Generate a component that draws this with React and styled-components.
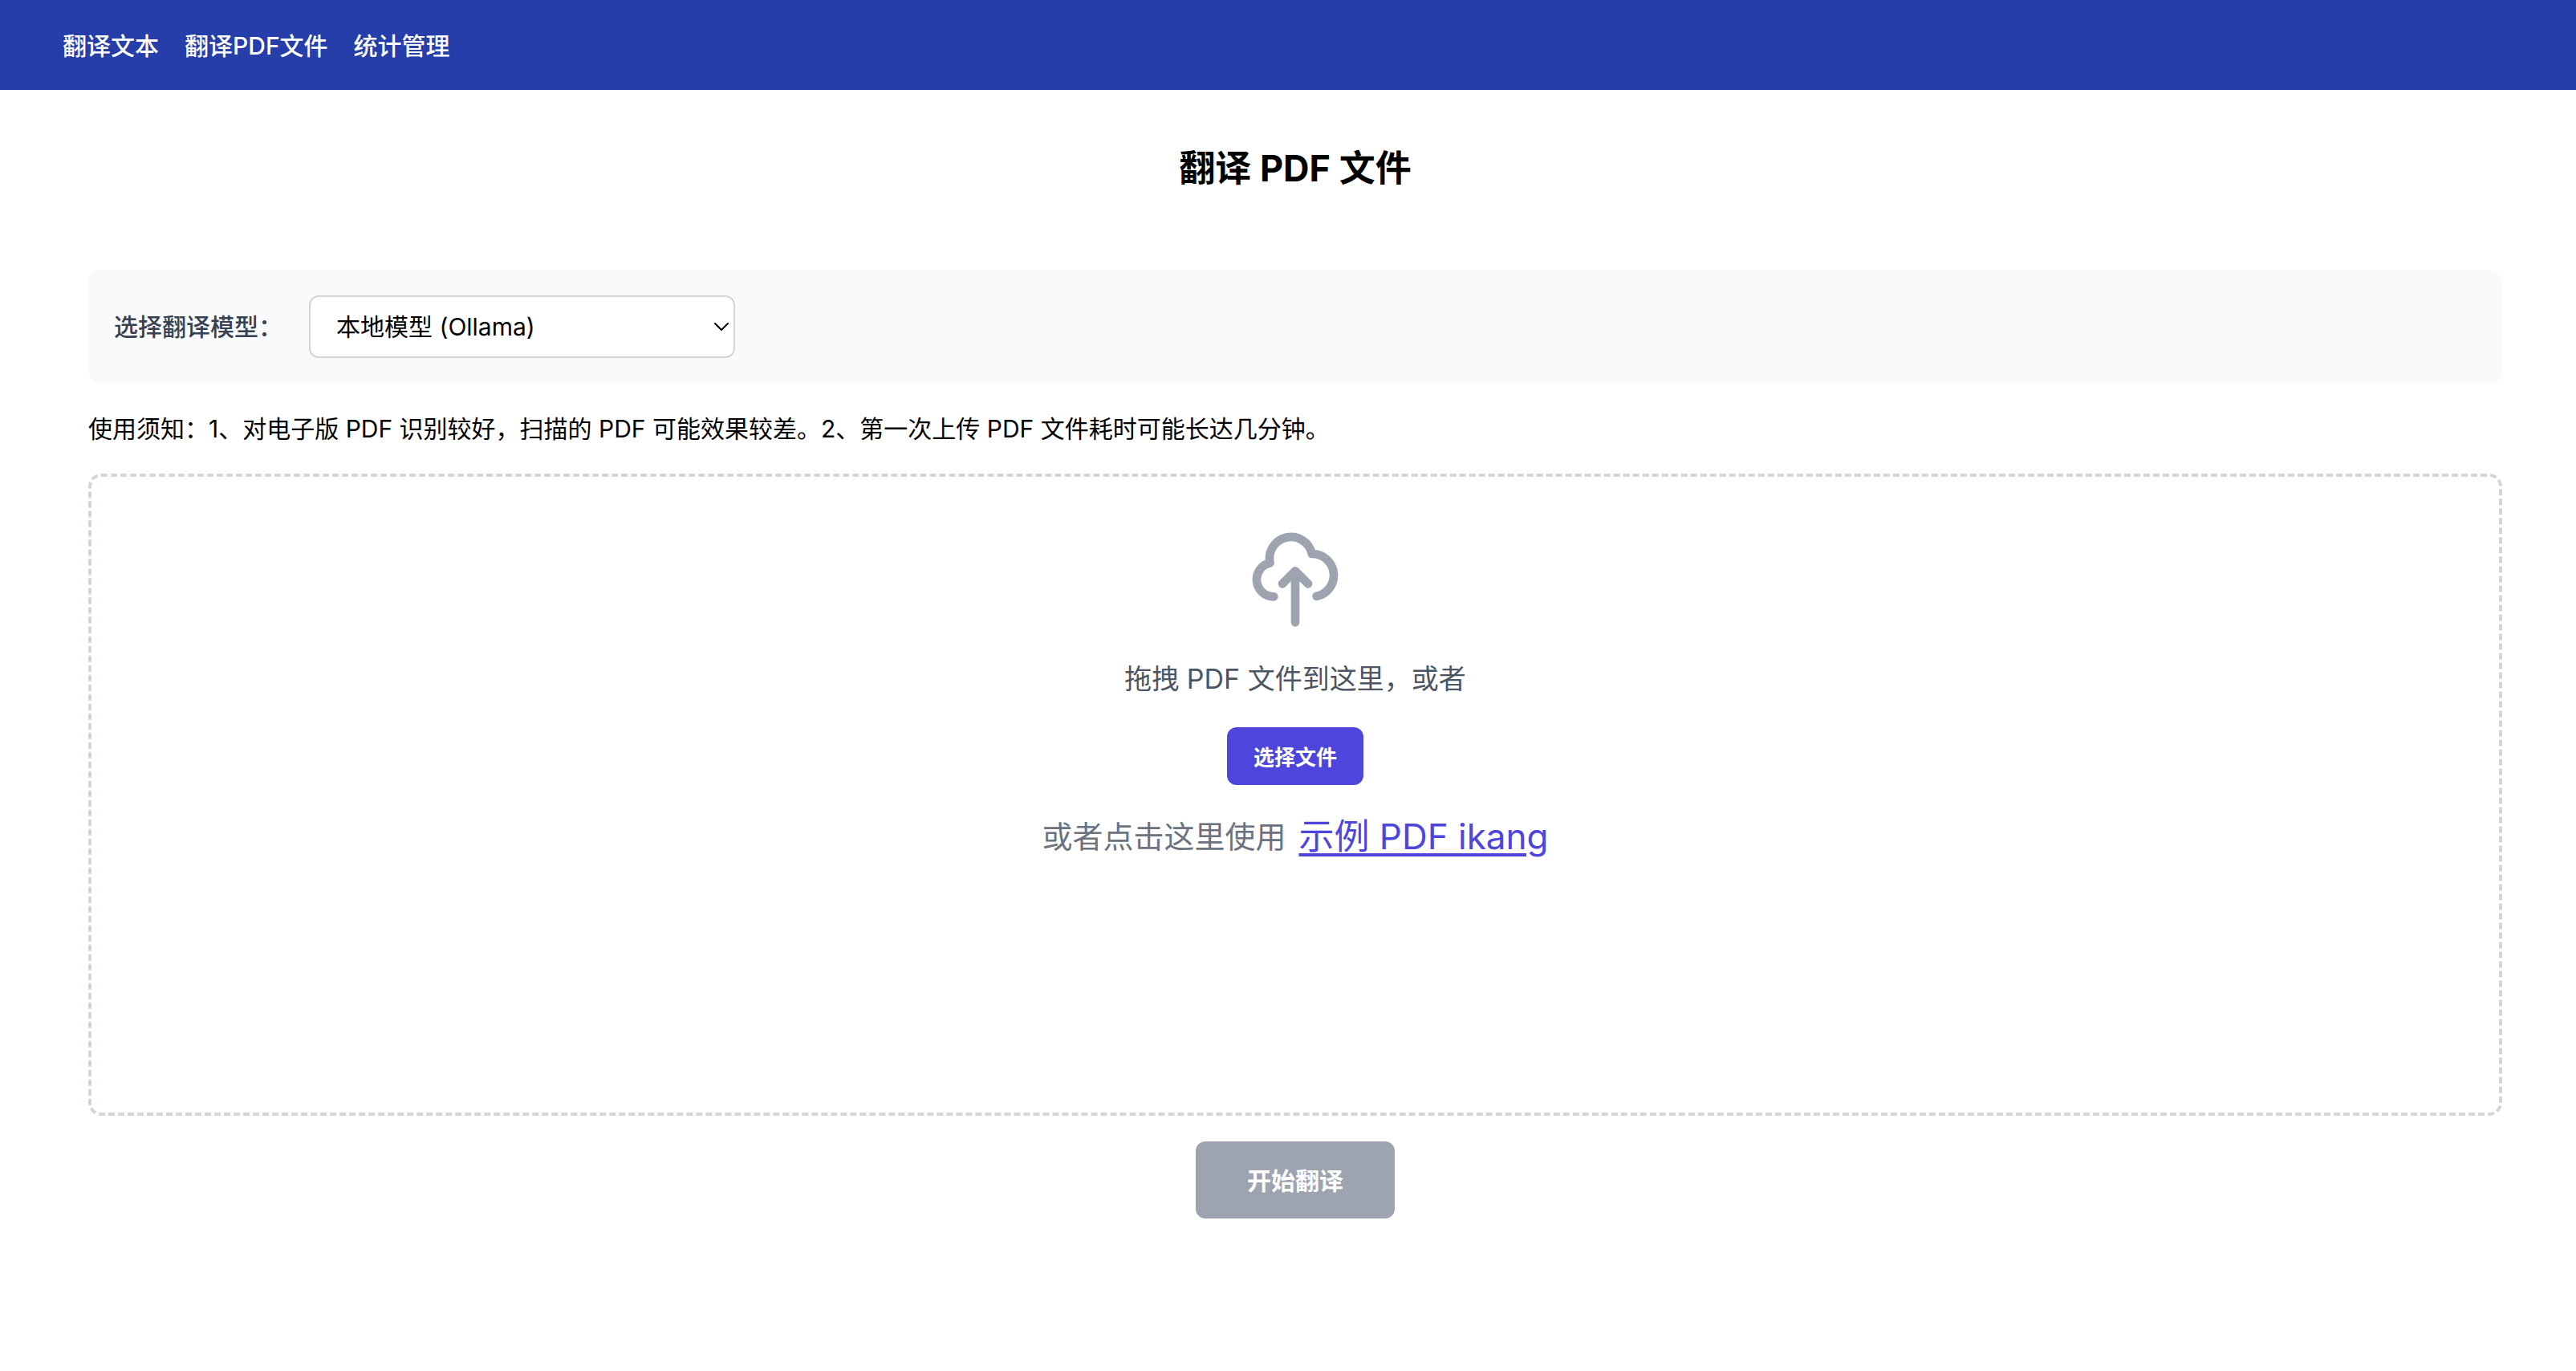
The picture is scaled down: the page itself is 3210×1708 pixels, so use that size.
import React, { useState } from "react";
import styled, { createGlobalStyle } from "styled-components";

const GlobalStyle = createGlobalStyle`
  *, *::before, *::after { box-sizing: border-box; }
  body {
    margin: 0;
    background: #fff;
    color: #000;
    font-family: Inter, "Noto Sans CJK SC", sans-serif;
    font-size: 30px;
    line-height: 48px;
  }
  button, select { font-family: inherit; }
`;

const Nav = styled.nav`
  display: flex;
  align-items: center;
  gap: 32px;
  height: 112px;
  padding: 2px 78px 0;
  background: #263ea9;
`;

const NavLink = styled.a`
  color: #fff;
  font-weight: 500;
  text-decoration: none;
`;

const Main = styled.main`
  display: flex;
  flex-direction: column;
  padding: 64px 92px 64px 110px;
`;

const Title = styled.h1`
  margin: 0 0 92px;
  font-size: 45px;
  font-weight: 700;
  line-height: 68px;
  text-align: center;
`;

const ModelPanel = styled.div`
  display: flex;
  align-items: center;
  gap: 33px;
  padding: 32px;
  border-radius: 16px;
  background: #f9fafc;
`;

const Label = styled.label`
  color: #374151;
  font-weight: 500;
`;

const SelectWrap = styled.div`
  position: relative;
  width: 531px;
`;

const Select = styled.select`
  display: block;
  width: 100%;
  height: 78px;
  padding: 0 32px;
  border: 2px solid #d2d5da;
  border-radius: 12px;
  background: #fff;
  color: #000;
  font-size: 30px;
  appearance: none;
`;

const Chevron = styled.svg`
  position: absolute;
  top: 30px;
  right: 8px;
  width: 18px;
  height: 18px;
  pointer-events: none;
`;

const Notice = styled.p`
  margin: 32px 0;
`;

const DropZone = styled.section`
  display: flex;
  flex-direction: column;
  align-items: center;
  gap: 32px;
  min-height: 800px;
  padding: 64px;
  border: 4px dashed #d2d5da;
  border-radius: 16px;
`;

const UploadIcon = styled.svg`
  width: 128px;
  height: 128px;
  color: #9da3af;
`;

const DropText = styled.p`
  margin: 0;
  color: #4b5563;
  font-size: 34px;
  line-height: 56px;
`;

const Button = styled.button`
  border: 0;
  border-radius: 12px;
  color: #fff;
  font-weight: 600;
`;

const PickButton = styled(Button)`
  height: 72px;
  padding: 0 33px 2px;
  background: #4e46dc;
  font-size: 26px;
`;

const StartButton = styled(Button)`
  align-self: center;
  height: 96px;
  margin-top: 32px;
  padding: 0 64px 2px;
  background: #9da3af;
  font-size: 30px;
`;

const SampleLine = styled.p`
  display: flex;
  align-items: center;
  gap: 16px;
  margin: 0;
  color: #6b7280;
  font-size: 38px;
  line-height: 64px;
`;

const SampleLink = styled.a`
  color: #4e46dc;
  font-size: 44px;
  text-decoration: underline;
  text-decoration-thickness: 4px;
  text-underline-offset: 5px;
`;

const links = ["翻译文本", "翻译PDF文件", "统计管理"];

export default function App() {
  const [model, setModel] = useState("ollama");
  return (
    <div lang="zh-CN">
      <GlobalStyle />
      <Nav>
        {links.map((text) => (
          <NavLink href="#" key={text}>{text}</NavLink>
        ))}
      </Nav>
      <Main>
        <Title>翻译 PDF 文件</Title>
        <ModelPanel>
          <Label htmlFor="model">选择翻译模型：</Label>
          <SelectWrap>
            <Select id="model" value={model} onChange={(e) => setModel(e.target.value)}>
              <option value="ollama">本地模型 (Ollama)</option>
            </Select>
            <Chevron viewBox="0 0 18 18" fill="none" stroke="#000" strokeWidth="2" strokeLinecap="round" strokeLinejoin="round" aria-hidden="true">
              <path d="M1 5l8 8 8-8" />
            </Chevron>
          </SelectWrap>
        </ModelPanel>
        <Notice>
          使用须知：1、对电子版 PDF 识别较好，扫描的 PDF 可能效果较差。2、第一次上传 PDF 文件耗时可能长达几分钟。
        </Notice>
        <DropZone>
          <UploadIcon viewBox="0 0 24 24" fill="none" stroke="currentColor" strokeWidth="2" strokeLinecap="round" strokeLinejoin="round" aria-hidden="true">
            <path d="M7 16a4 4 0 01-.88-7.903A5 5 0 1115.9 6L16 6a5 5 0 011 9.9M15 13l-3-3m0 0l-3 3m3-3v12" />
          </UploadIcon>
          <DropText>拖拽 PDF 文件到这里，或者</DropText>
          <PickButton type="button">选择文件</PickButton>
          <SampleLine>
            <span>或者点击这里使用</span>
            <SampleLink href="#">示例 PDF ikang</SampleLink>
          </SampleLine>
        </DropZone>
        <StartButton type="button">开始翻译</StartButton>
      </Main>
    </div>
  );
}
